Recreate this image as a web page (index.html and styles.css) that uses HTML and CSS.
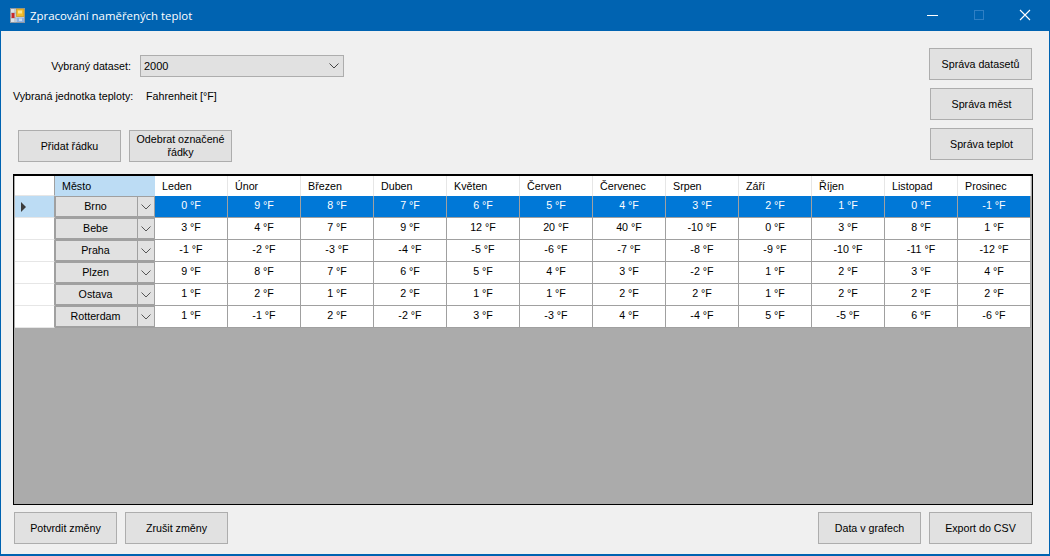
FILE: index.html
```html
<!DOCTYPE html>
<html lang="cs">
<head>
    <meta charset="UTF-8">
    <title>Zpracování naměřených teplot</title>
    <link rel="stylesheet" href="styles.css">
</head>
<body>
    <div class="window">
        <header class="titlebar">
            <svg class="app-icon" width="16" height="16" viewBox="0 0 16 16">
                <rect x="0.5" y="0.5" width="14" height="14" fill="#dde1e6" stroke="#8d97a3"/>
                <path d="M0.5 5h6M0.5 10h6M5 0.5v14" stroke="#a9b2bc" fill="none"/>
                <rect x="6.5" y="1" width="7.5" height="7.5" fill="#f3bd2c" stroke="#c2941c" stroke-width="0.7"/>
                <rect x="8" y="2.5" width="4" height="3" fill="#fbe48a"/>
                <rect x="1.5" y="5" width="3" height="5" fill="#c8282a"/>
                <rect x="6.5" y="9.5" width="7.5" height="4.5" fill="#8fb2e2"/>
                <rect x="9" y="10.5" width="3" height="2.5" fill="#c9dbf3"/>
            </svg>
            <span class="title">Zpracování naměřených teplot</span>
            <div class="window-controls">
                <svg width="46" height="31" viewBox="0 0 46 31"><path d="M17 15.5h11" stroke="#fff" fill="none"/></svg>
                <svg width="46" height="31" viewBox="0 0 46 31"><rect x="18.5" y="10.5" width="9" height="9" fill="none" stroke="#2f7fc4"/></svg>
                <svg width="46" height="31" viewBox="0 0 46 31"><path d="M18 10l10 10M28 10l-10 10" stroke="#fff" fill="none" stroke-width="1.1"/></svg>
            </div>
        </header>

        <div class="content">
            <div class="top">
                <div class="top-left">
                    <div class="dataset-row">
                        <label class="dataset-label">Vybraný dataset:</label>
                        <div class="combo">
                            <span>2000</span>
                            <svg width="10" height="6" viewBox="0 0 10 6"><path d="M0.5 0.5l4.5 4.5 4.5-4.5" fill="none" stroke="#444"/></svg>
                        </div>
                    </div>
                    <div class="unit-row">
                        <span class="unit-label">Vybraná jednotka teploty:</span>
                        <span>Fahrenheit [°F]</span>
                    </div>
                    <div class="row-buttons">
                        <button class="btn">Přidat řádku</button>
                        <button class="btn">Odebrat označené<br>řádky</button>
                    </div>
                </div>
                <div class="top-right">
                    <button class="btn btn-first">Správa datasetů</button>
                    <button class="btn">Správa měst</button>
                    <button class="btn">Správa teplot</button>
                </div>
            </div>

            <div class="grid-box">
                <div class="grid" id="grid"></div>
            </div>

            <div class="bottom">
                <div class="bottom-group">
                    <button class="btn">Potvrdit změny</button>
                    <button class="btn">Zrušit změny</button>
                </div>
                <div class="bottom-group">
                    <button class="btn">Data v grafech</button>
                    <button class="btn">Export do CSV</button>
                </div>
            </div>
        </div>
    </div>

    <script>
        const months = ['Leden', 'Únor', 'Březen', 'Duben', 'Květen', 'Červen', 'Červenec', 'Srpen', 'Září', 'Říjen', 'Listopad', 'Prosinec'];
        const rows = [
            { city: 'Brno', temps: [0, 9, 8, 7, 6, 5, 4, 3, 2, 1, 0, -1] },
            { city: 'Bebe', temps: [3, 4, 7, 9, 12, 20, 40, -10, 0, 3, 8, 1] },
            { city: 'Praha', temps: [-1, -2, -3, -4, -5, -6, -7, -8, -9, -10, -11, -12] },
            { city: 'Plzen', temps: [9, 8, 7, 6, 5, 4, 3, -2, 1, 2, 3, 4] },
            { city: 'Ostava', temps: [1, 2, 1, 2, 1, 1, 2, 2, 1, 2, 2, 2] },
            { city: 'Rotterdam', temps: [1, -1, 2, -2, 3, -3, 4, -4, 5, -5, 6, -6] },
        ];
        const arrow = '<svg width="10" height="6" viewBox="0 0 10 6"><path d="M0.5 0.5l4.5 4.5 4.5-4.5" fill="none" stroke="#555"/></svg>';

        let html = '<div class="corner"></div><div class="head head-city">Město</div>';
        months.forEach(m => {
            html += '<div class="head">' + m + '</div>';
        });
        rows.forEach((row, i) => {
            const selected = i === 0;
            html += '<div class="row-head' + (selected ? ' row-head-current' : '') + '"></div>';
            html += '<div class="city"><span class="city-name">' + row.city + '</span><span class="city-arrow">' + arrow + '</span></div>';
            row.temps.forEach(t => {
                html += '<div class="cell' + (selected ? ' cell-selected' : '') + '">' + t + ' °F</div>';
            });
        });
        document.getElementById('grid').innerHTML = html;
    </script>
</body>
</html>
```

FILE: styles.css
```css
html, body {
    margin: 0;
    padding: 0;
}
body {
    font-family: "Liberation Sans", Arial, sans-serif;
    font-size: 10.7px;
    color: #000;
}
.window {
    width: 1050px;
    height: 556px;
    box-sizing: border-box;
    display: flex;
    flex-direction: column;
    background-color: #f0f0f0;
    border: 1px solid #0063b1;
    border-top: none;
    border-bottom-width: 2px;
}
.titlebar {
    height: 31px;
    flex: none;
    display: flex;
    align-items: center;
    background-color: #0063b1;
    color: white;
    padding-left: 10px;
    margin: 0 -1px;
}
.app-icon {
    margin-right: 4px;
}
.title {
    font-family: "Open Sans", sans-serif;
    font-size: 11.4px;
}
.window-controls {
    display: flex;
    margin-left: auto;
    margin-right: 2px;
    margin-top: -1px;
}
.content {
    flex: 1;
    display: flex;
    flex-direction: column;
    padding: 0 16px 0 12px;
}
.top {
    display: flex;
    justify-content: space-between;
    height: 143px;
}
.dataset-row {
    display: flex;
    align-items: center;
    margin-top: 24px;
    height: 22px;
}
.dataset-label {
    width: 118px;
    text-align: right;
    margin-right: 9px;
    padding-bottom: 1px;
}
.combo {
    width: 204px;
    height: 22px;
    box-sizing: border-box;
    display: flex;
    align-items: center;
    justify-content: space-between;
    background-color: #e1e1e1;
    border: 1px solid #adadad;
    padding: 0 4px 1px 3px;
    font-size: 11px;
}
.unit-row {
    display: flex;
    margin-top: 12px;
    height: 14px;
    line-height: 14px;
}
.unit-label {
    width: 133px;
}
.row-buttons {
    display: flex;
    gap: 8px;
    margin: 27px 0 0 5px;
}
.btn {
    width: 103px;
    height: 32px;
    box-sizing: border-box;
    background-color: #e1e1e1;
    border: 1px solid #adadad;
    font-family: inherit;
    font-size: 10.7px;
    line-height: 13px;
    color: #000;
    padding: 0;
}
.top-right {
    display: flex;
    flex-direction: column;
    gap: 8px;
    margin-top: 17px;
}
.btn-first {
    margin-left: -1px;
}
.grid-box {
    height: 331px;
    box-sizing: border-box;
    background-color: #ababab;
    border: 1px solid #000;
    border-top-width: 2px;
}
.grid {
    display: grid;
    grid-template-columns: 40px 100px repeat(12, 73px);
    grid-template-rows: 20px;
    grid-auto-rows: 22px;
    margin-left: 1px;
}
.corner, .head {
    background-color: #fff;
    border-right: 1px solid #e6e6e6;
    box-sizing: border-box;
    line-height: 20px;
    padding-left: 7px;
}
.corner {
    border-right-color: #a0a0a0;
    border-bottom: 1px solid #e6e6e6;
}
.head-city {
    background-color: #bcdcf4;
    border-right: none;
}
.row-head {
    background-color: #fff;
    border-right: 1px solid #a0a0a0;
    border-bottom: 1px solid #e6e6e6;
    box-sizing: border-box;
}
.row-head-current {
    background-color: #bcdcf4;
    position: relative;
}
.row-head-current::after {
    content: "";
    position: absolute;
    left: 6px;
    top: 6px;
    border-left: 5px solid #3c3c3c;
    border-top: 5px solid transparent;
    border-bottom: 5px solid transparent;
}
.city {
    display: flex;
    box-sizing: border-box;
    background-color: #e1e1e1;
    border: 1px solid #a0a0a0;
    border-width: 1px 1px 2px 1px;
    line-height: 18px;
}
.city-name {
    flex: 1;
    text-align: center;
    padding-right: 2px;
}
.city-arrow {
    width: 16px;
    border-left: 1px solid #a0a0a0;
    display: flex;
    align-items: center;
    justify-content: center;
}
.cell {
    box-sizing: border-box;
    background-color: #fff;
    border-right: 1px solid #a0a0a0;
    border-bottom: 1px solid #a0a0a0;
    text-align: center;
    line-height: 18px;
}
.cell-selected {
    background-color: #0078d7;
    color: #fff;
}
.bottom {
    display: flex;
    justify-content: space-between;
    margin: 7px 1px 0 1px;
}
.bottom-group {
    display: flex;
    gap: 8px;
}
```
